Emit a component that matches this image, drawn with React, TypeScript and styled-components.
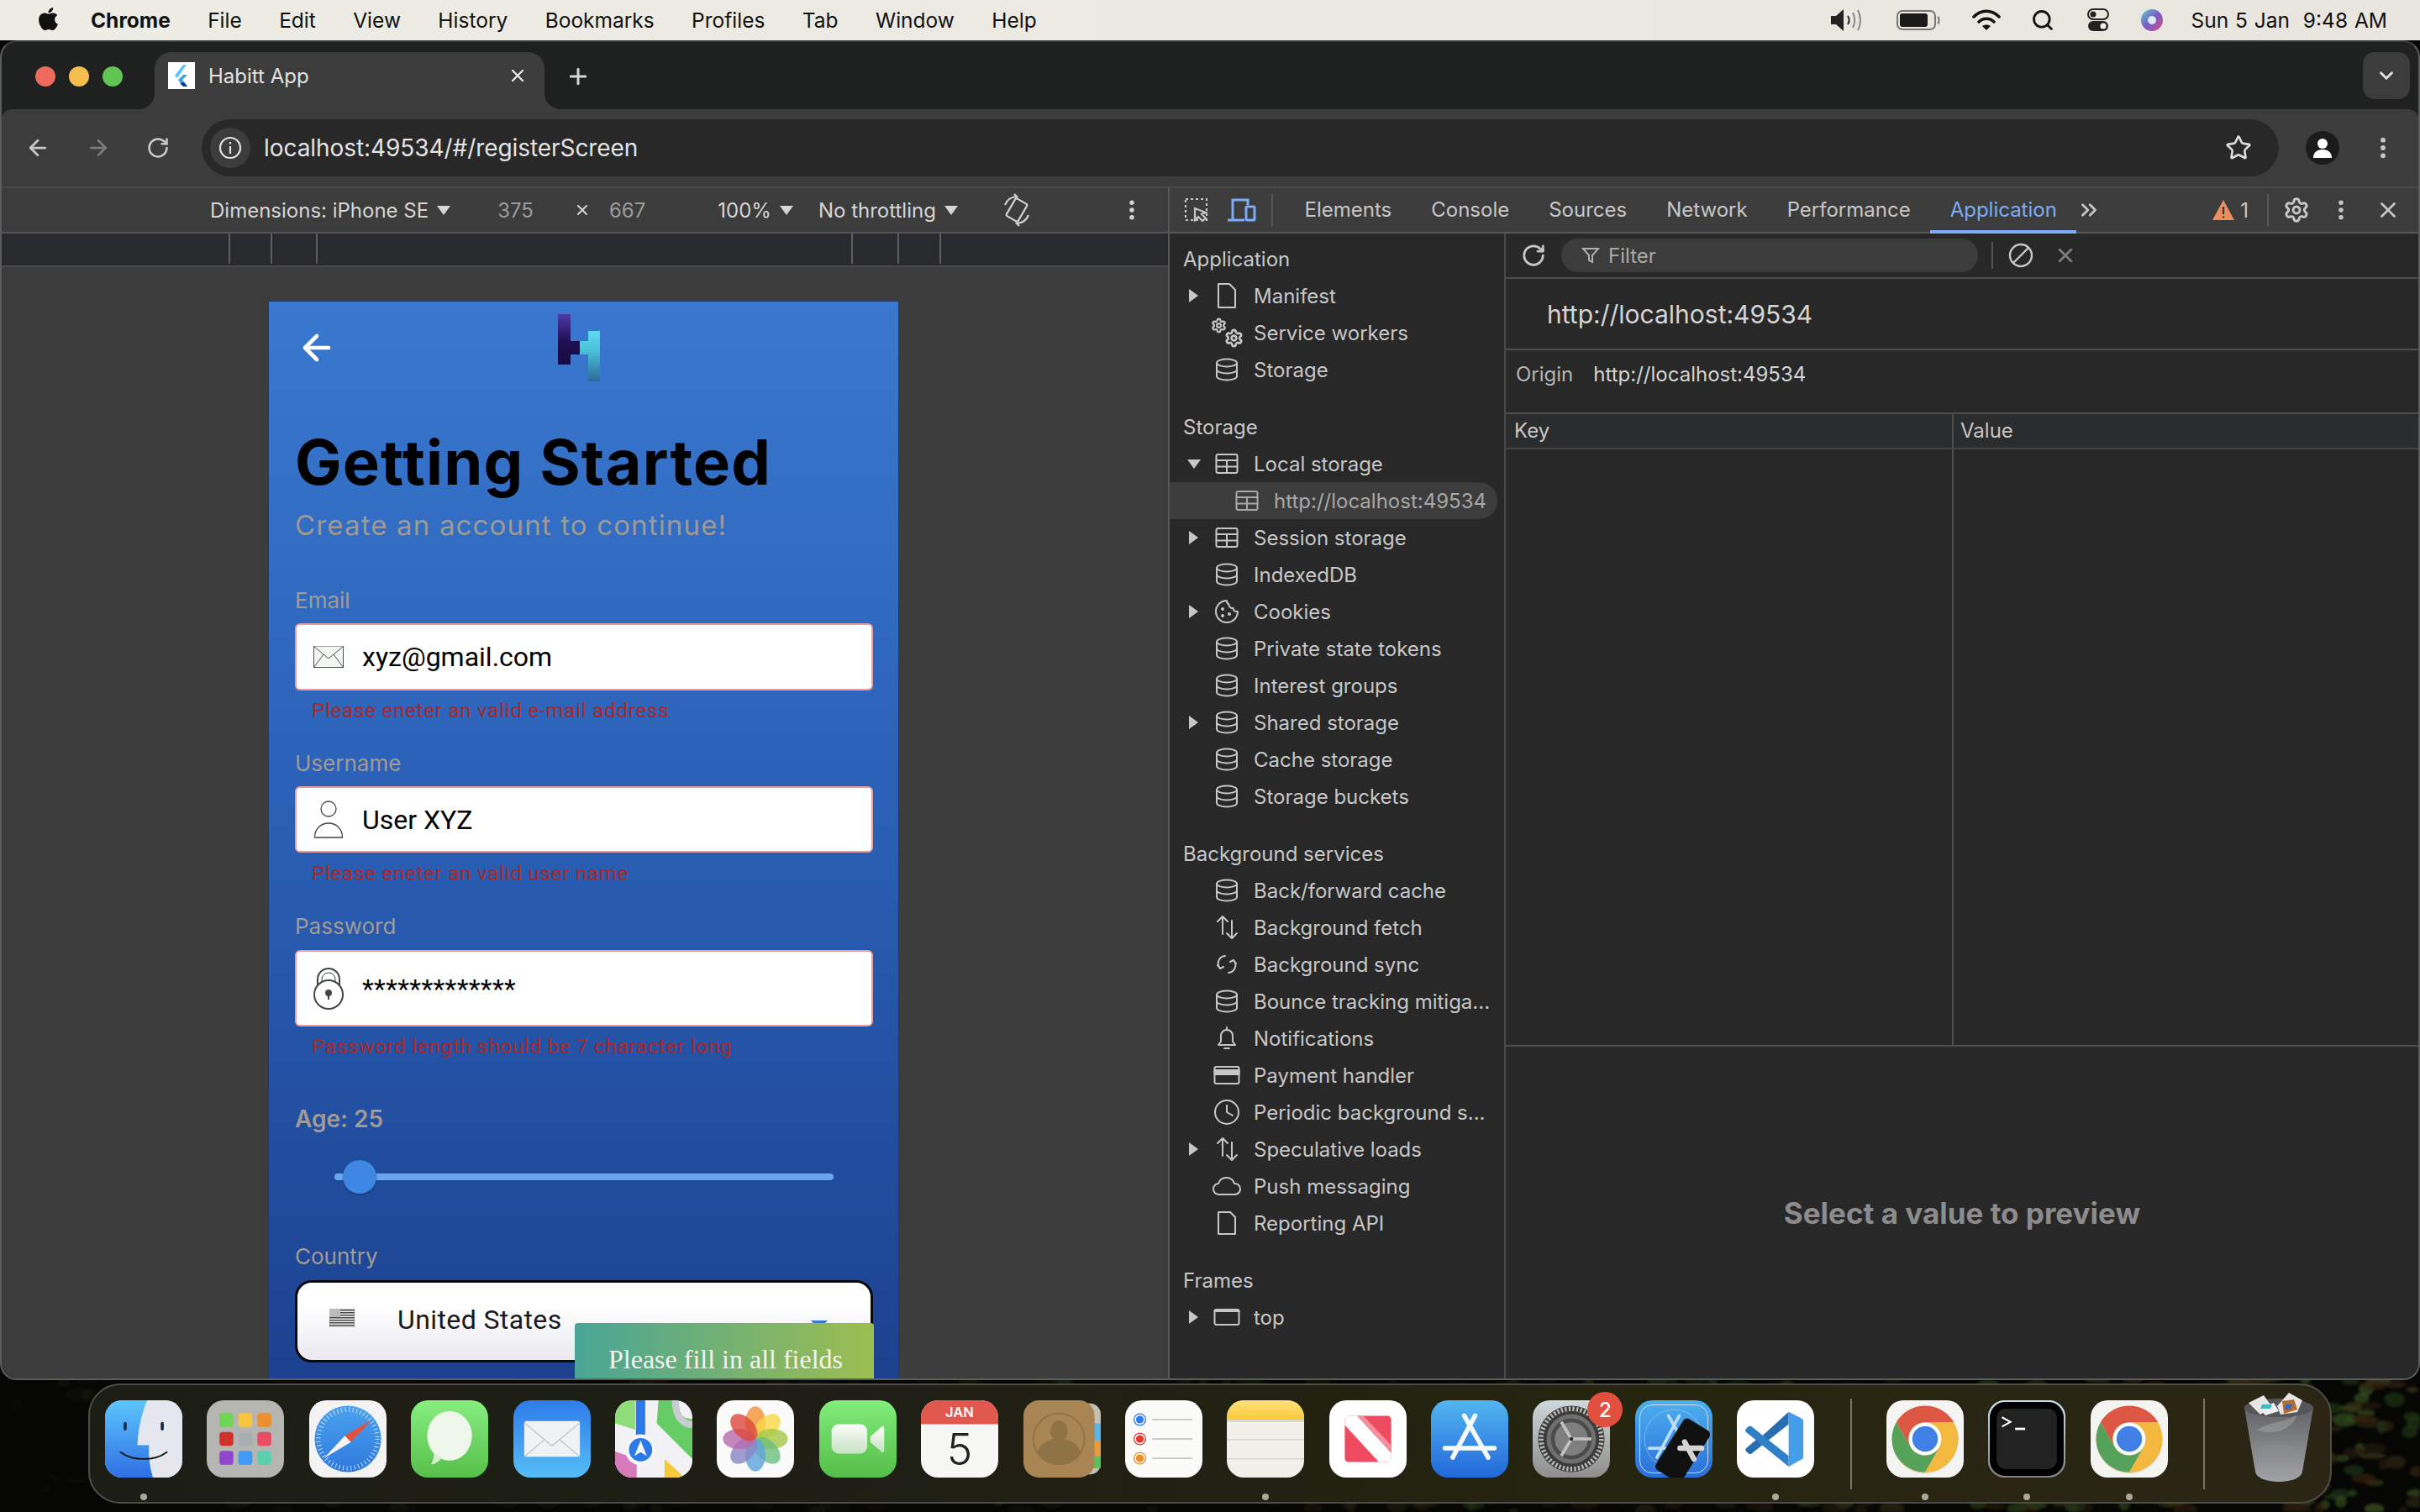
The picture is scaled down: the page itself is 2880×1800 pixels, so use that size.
import React from "react";
import styled, { createGlobalStyle } from "styled-components";
import { FaApple } from "react-icons/fa";
import { ArrowLeft, ArrowRight, RotateCw, Star, EllipsisVertical, X, Plus, ChevronDown, Settings, ChevronsRight, Search } from "lucide-react";

const Global = createGlobalStyle`
  html, body { margin: 0; padding: 0; background: #050604; }
  * { box-sizing: border-box; }
`;
const ui = `Inter, "Liberation Sans", sans-serif`;

const Screen = styled.div`
  position: relative; width: 2880px; height: 1800px; overflow: hidden;
  display: flex; flex-direction: column; font-family: ${ui}; background: #060705;
`;
const WallpaperArt = styled.svg`position: absolute; inset: 0; width: 2880px; height: 1800px; filter: blur(1.5px);`;
const MenuBar = styled.header`
  position: relative; height: 48px; flex: none; display: flex; align-items: center; padding-left: 42px;
  background: linear-gradient(90deg, #edece5, #e8e6df); color: #111; font-size: 24.5px;
`;
const AppleMark = styled.span`display: flex; width: 66px; font-size: 31px; margin-top: -3px;`;
const MenuItems = styled.nav`display: flex; gap: 44.4px;`;
const MenuItem = styled.span<{ $bold?: boolean }>`font-weight: ${(p) => (p.$bold ? 700 : 400)};`;
const StatusArea = styled.div`margin-left: auto; display: flex; align-items: center; padding-right: 39px;`;
const StatusSlot = styled.span<{ $w: number }>`display: flex; width: ${(p) => p.$w}px; align-items: center;`;
const Clock = styled.span`font-size: 24.5px; word-spacing: 1px; white-space: pre;`;

const Window = styled.main`
  position: relative; width: 2880px; height: 1595px; flex: none; display: flex; flex-direction: column;
  border-radius: 20px; overflow: hidden; background: #1f2120; border: 2px solid #5c5c5c; border-top-color: #3a3a3a; 
`;
const TabStrip = styled.div`height: 80px; flex: none; display: flex; align-items: flex-end; padding-left: 182px; position: relative;`;
const Light = styled.i<{ $c: string; $x: number }>`
  position: absolute; left: ${(p) => p.$x}px; top: 29px; width: 24px; height: 24px; border-radius: 50%; background: ${(p) => p.$c};
`;
const BrowserTab = styled.div`
  position: relative; width: 464px; height: 68px; background: #3c3c3c; border-radius: 20px 20px 0 0; display: flex; align-items: center;
  padding: 0 20px 12px 16px; color: #e3e3e3; font-size: 24px;
  &::before, &::after { content: ""; position: absolute; bottom: 0; width: 20px; height: 20px; }
  &::before { left: -20px; background: radial-gradient(circle at 0 0, #1f2120 20px, #3c3c3c 20.5px); }
  &::after { right: -20px; background: radial-gradient(circle at 100% 0, #1f2120 20px, #3c3c3c 20.5px); }
`;
const Favicon = styled.span`width: 32px; height: 32px; background: #fff; display: flex; margin-right: 16px; flex: none;`;
const TabTitle = styled.span`flex: 1;`;
const NewTab = styled.span`display: flex; color: #d5d5d5; margin: 0 0 24px 25px; align-self: flex-end;`;
const TabMenu = styled.span`
  position: absolute; right: 10px; top: 12px; width: 56px; height: 56px; border-radius: 14px; background: #3c3c3c; color: #e3e3e3;
  display: flex; align-items: center; justify-content: center;
`;
const Toolbar = styled.div`
  height: 92px; flex: none; background: #3c3c3c; border-radius: 12px 12px 0 0; display: flex; align-items: center; color: #c8c8c8; padding-left: 28px;
`;
const NavBtn = styled.span<{ $dim?: boolean }>`display: flex; width: 72px; color: ${(p) => (p.$dim ? "#7b7b7b" : "#c8c8c8")};`;
const Omnibox = styled.div`
  width: 2472px; height: 68px; margin-left: -6px; border-radius: 34px; background: #282828; display: flex; align-items: center; padding: 0 10px; color: #e3e3e3; font-size: 28px;
`;
const InfoChip = styled.span`width: 48px; height: 48px; border-radius: 50%; background: #3c3c3c; display: flex; align-items: center; justify-content: center; margin-right: 16px;`;
const UrlText = styled.span`flex: 1; letter-spacing: -0.07px;`;
const StarBtn = styled.span`display: flex; margin-right: 22px; color: #dcdcdc;`;
const Avatar = styled.span`width: 40px; height: 40px; border-radius: 50%; background: #1b1b1b; display: flex; margin-left: 32px; overflow: hidden;`;
const MoreBtn = styled.span`display: flex; margin-left: 36px; color: #c8c8c8;`;

const Workspace = styled.div`flex: 1; min-height: 0; display: flex;`;
const DeviceArea = styled.section`width: 1388px; flex: none; display: flex; flex-direction: column;`;
const DeviceToolbar = styled.div`
  height: 56px; flex: none; display: flex; align-items: center; padding-left: 248px; background: #3c3c3c;
  border-top: 2px solid #484848; border-bottom: 2px solid #565656; color: #d6d6d6; font-size: 24px;
`;
const DeviceItem = styled.span<{ $ml?: number; $dim?: boolean }>`
  display: flex; align-items: center; margin-left: ${(p) => p.$ml ?? 0}px; color: ${(p) => (p.$dim ? "#9b9b9b" : "#d6d6d6")}; white-space: nowrap;
`;
const Caret = styled.i`
  display: inline-block; width: 0; height: 0; margin-left: 10px; border-left: 8px solid transparent; border-right: 8px solid transparent; border-top: 11px solid currentColor;
`;
const Ruler = styled.div`height: 40px; flex: none; background: #292a2d; display: flex; padding-left: 270px; border-bottom: 2px solid #4a4a4a;`;
const RulerTick = styled.i<{ $ml: number }>`width: 2px; height: 36px; background: #5f5f5f; margin-left: ${(p) => p.$ml}px;`;
const Viewport = styled.div`flex: 1; min-height: 0; background: #3c3c3c; padding: 40px 0 0 317px; display: flex;`;
const Phone = styled.div`
  position: relative; width: 751px; overflow: hidden; border: 1px solid #1d3a70; border-bottom: 0; padding: 15px 30px 0 31px;
  background: linear-gradient(180deg, #3a78cf 0%, #2c64ba 40%, #1c418f 100%); color: #a09b94;
  font-family: Inter, sans-serif;
`;
const PhoneHeader = styled.div`display: flex; align-items: center; height: 80px; color: #fff;`;
const BackArrow = styled.span`display: flex; margin-left: 2px; width: 48px;`;
const LogoMark = styled.span`display: flex; margin-left: 263px;`;
const Title = styled.h1`margin: 56px 0 0; font-size: 74px; line-height: 80px; font-weight: 700; color: #000; letter-spacing: 1.2px;`;
const Subtitle = styled.p`margin: 15px 0 0; font-size: 33px; line-height: 40px; color: #9f9a92; letter-spacing: 1.15px;`;
const FieldLabel = styled.div<{ $mt: number }>`margin-top: ${(p) => p.$mt}px; font-size: 26px; line-height: 30px; color: #a09b94;`;
const InputBox = styled.div<{ $h: number; $mt: number; $ls?: number }>`
  margin-top: ${(p) => p.$mt}px; height: ${(p) => p.$h}px; background: #fff; border: 2px solid #ec9c9c; border-radius: 6px;
  display: flex; align-items: center; padding-left: 20px; color: #000; font-family: Roboto, sans-serif; font-size: 32px; letter-spacing: ${(p) => p.$ls ?? 0}px;
`;
const InputIcon = styled.span`display: flex; width: 58px; flex: none;`;
const ErrorText = styled.div<{ $mt: number }>`
  margin: ${(p) => p.$mt}px 0 0 20px; font-family: Roboto, sans-serif; font-size: 24px; line-height: 28px; color: #ab2727; letter-spacing: 0.8px; 
`;
const AgeLabel = styled.div`margin-top: 54px; font-size: 28px; line-height: 36px; font-weight: 600; color: #a09b94;`;
const SliderTrack = styled.div`position: relative; margin: 47px 47px 0; height: 8px; border-radius: 4px; background: #6aa6ef; margin-bottom: 16px;`;
const SliderThumb = styled.i`position: absolute; left: 10px; top: -16px; width: 40px; height: 40px; border-radius: 50%; background: #3e87e2; box-shadow: 0 1px 3px rgba(0,0,0,.3);`;
const SelectBox = styled.div`
  margin-top: 13px; height: 98px; border: 3px solid #0a0a0a; border-radius: 20px; background: linear-gradient(180deg, #fff 30%, #e9e9ef 100%);
  display: flex; align-items: center; padding-left: 38px; color: #1a1a1a; font-family: Roboto, sans-serif; font-size: 32px; letter-spacing: 0.4px;
`;
const FlagSlot = styled.span`display: flex; width: 81px; flex: none; margin-top: -8px;`;
const SelectText = styled.span`margin-top: -4px;`;
const SelectCaret = styled.i`
  position: absolute; left: 645px; top: 1213px; width: 0; height: 0; border-left: 10px solid transparent; border-right: 10px solid transparent; border-top: 11px solid #3a78cf;
`;
const Toast = styled.div`
  position: absolute; right: 29px; bottom: 0; width: 356px; height: 66px; border-radius: 4px 4px 0 0; 
  background: linear-gradient(90deg, #49a596, #9dbe50); color: #f4f4f0; font-family: "Liberation Serif", serif; font-size: 32px;
  display: flex; align-items: flex-start; padding: 25px 0 0 40px; white-space: nowrap;
`;

const DevTools = styled.section`flex: 1; min-width: 0; display: flex; flex-direction: column; background: #282828; border-left: 2px solid #565656; color: #c7c7c7; font-size: 24px;`;
const DevTabs = styled.div`
  height: 56px; flex: none; display: flex; align-items: center; background: #3c3c3c; border-top: 2px solid #484848; border-bottom: 2px solid #565656; padding-left: 16px;
`;
const DevIcon = styled.span<{ $w: number; $c?: string; $ml?: number }>`display: flex; width: ${(p) => p.$w}px; justify-content: center; margin-left: ${(p) => p.$ml ?? 0}px; color: ${(p) => p.$c ?? "#c7c7c7"};`;
const DevSep = styled.i<{ $mx: number }>`width: 2px; height: 38px; background: #565656; margin: 0 ${(p) => p.$mx}px;`;
const DevTab = styled.span<{ $on?: boolean; $ml?: number }>`
  position: relative; padding: 0 23.5px; line-height: 52px; height: 52px; margin-left: ${(p) => p.$ml ?? 0}px; color: ${(p) => (p.$on ? "#7cacf8" : "#c7c7c7")}; white-space: nowrap;
  ${(p) => p.$on && `&::after { content: ""; position: absolute; left: 0; right: 0; bottom: -2px; height: 4px; background: #7cacf8; }`}
`;
const DevTabsRight = styled.div`margin-left: auto; display: flex; align-items: center; padding-right: 8px;`;
const WarnCount = styled.span`margin: 0 14px 0 6px;`;
const DevBody = styled.div`flex: 1; min-height: 0; display: flex;`;
const Sidebar = styled.aside`width: 400px; flex: none; padding-top: 8px; display: flex; flex-direction: column; gap: 24px; border-right: 2px solid #4a4a4a;`;
const TreeGroup = styled.div`display: flex; flex-direction: column;`;
const TreeHeading = styled.div`height: 44px; line-height: 46px; padding-left: 16px;`;
const TreeRow = styled.div<{ $sel?: boolean }>`
  height: 44px; display: flex; align-items: center; padding-left: ${(p) => (p.$sel ? 44 : 20)}px; width: 390px; white-space: nowrap;
  ${(p) => p.$sel && `background: #3c3c3c; border-radius: 0 22px 22px 0; color: #a8a8a8;`}
`;
const ArrowSlot = styled.span`width: 28px; flex: none; display: flex; align-items: center; padding-left: 3px;`;
const ArrowRightMark = styled.i`width: 0; height: 0; border-top: 8px solid transparent; border-bottom: 8px solid transparent; border-left: 11px solid #c7c7c7;`;
const ArrowDownMark = styled.i`width: 0; height: 0; border-left: 8px solid transparent; border-right: 8px solid transparent; border-top: 11px solid #c7c7c7; margin-left: -2px;`;
const NodeIcon = styled.span`width: 40px; flex: none; display: flex; justify-content: center; margin-right: 12px;`;
const Pane = styled.div`flex: 1; min-width: 0; display: flex; flex-direction: column;`;
const FilterBar = styled.div`height: 54px; flex: none; display: flex; align-items: center; padding-left: 18px; border-bottom: 2px solid #4e4e4e;`;
const FilterPill = styled.div`
  width: 496px; height: 40px; border-radius: 20px; background: #3c3c3c; margin-left: 18px; display: flex; align-items: center; padding-left: 24px; color: #a9a9a9; gap: 10px;
`;
const FilterSep = styled.i`width: 2px; height: 32px; background: #565656; margin: 0 18px 0 16px;`;
const OriginTitle = styled.div`height: 85px; flex: none; display: flex; align-items: center; padding-left: 49px; border-bottom: 2px solid #4e4e4e; font-size: 30px; color: #d4d4d4;`;
const OriginRow = styled.div`height: 76px; flex: none; display: flex; align-items: center; padding: 0 0 18px 12px; border-bottom: 2px solid #4e4e4e; gap: 24px; color: #d4d4d4;`;
const OriginKey = styled.span`color: #b5b5b5;`;
const StorageTable = styled.div`height: 753px; flex: none; display: grid; grid-template-columns: 533px 1fr; grid-template-rows: 42px 1fr; border-bottom: 2px solid #4e4e4e;`;
const HeadCell = styled.div<{ $last?: boolean }>`
  background: #2b2c2e; border-bottom: 2px solid #444; padding-left: ${(p) => (p.$last ? 8 : 10)}px; line-height: 40px; ${(p) => !p.$last && "border-right: 2px solid #4e4e4e;"}
`;
const BodyCell = styled.div<{ $last?: boolean }>`${(p) => !p.$last && "border-right: 2px solid #4e4e4e;"}`;
const Preview = styled.div`flex: 1; display: flex; align-items: center; justify-content: center; font-size: 35px; font-weight: 700; color: #8c8c8c;`;

const Dock = styled.footer`
  position: relative; flex: none; width: 2670px; height: 143px; margin: 4px 0 0 105px; border-radius: 38px; border: 2px solid #4e4d45;
  background: linear-gradient(90deg, #1c1d14 0%, #1f1f14 40%, #26250f 70%, #2c2516 100%); display: flex; padding: 18px 0 0 18px; gap: 29.4px;
`;
const DockItem = styled.div`position: relative; width: 92px; flex: none; display: flex; flex-direction: column; align-items: center;`;
const DockArt = styled.span<{ $mt?: number }>`display: flex; width: 92px; height: 92px; margin-top: ${(p) => p.$mt ?? 0}px;`;
const RunDot = styled.i<{ $on?: boolean }>`width: 8px; height: 8px; border-radius: 50%; margin-top: 19px; background: ${(p) => (p.$on ? "#a9a89c" : "transparent")};`;
const DockSep = styled.i`width: 2px; height: 108px; margin: -2px 12px 0 13px; background: #77756a; flex: none;`;
const Badge = styled.span`
  position: absolute; right: -15px; top: -10px; width: 42px; height: 42px; border-radius: 50%; background: #e14f3f; color: #fff; font-size: 24px;
  display: flex; align-items: center; justify-content: center; font-weight: 500;
`;

const I = ({ w, h, vb, children, sw = 2 }: any) => (
  <svg width={w} height={h} viewBox={vb} fill="none" stroke="currentColor" strokeWidth={sw} strokeLinecap="round" strokeLinejoin="round">{children}</svg>
);

const nodeIcons: Record<string, React.ReactNode> = {
  doc: <I w={26} h={32} vb="0 0 26 32"><path d="M3 2h13l7 7v21H3z" /></I>,
  gears: <svg width="38" height="36" viewBox="0 0 38 36"><Settings x={0} y={0} size={19} strokeWidth={2.8} /><Settings x={16} y={13} size={23} strokeWidth={2.8} /></svg>,
  db: <I w={28} h={28} vb="0 0 28 28"><ellipse cx="14" cy="6" rx="12" ry="4.5" /><path d="M2 6v16c0 2.5 5.4 4.5 12 4.5S26 24.500 26 22V6M2 14c0 2.500 5.400 4.500 12 4.500S26 16.500 26 14" /></I>,
  table: <I w={28} h={26} vb="0 0 28 26"><rect x="1.500" y="2" width="25" height="22" rx="2" /><path d="M1.500 9h25M1.500 16.500h25M14 9v15" /></I>,
  cookie: <I w={32} h={32} vb="0 0 32 32"><path d="M16 3a13 13 0 1 0 13 13c-3 .5-5-1-5.500-4-3 .5-5-1.500-5-4.500C16.500 7 16 5 16 3z" /><circle cx="11" cy="13" r="1" fill="currentColor" /><circle cx="19" cy="19" r="1" fill="currentColor" /><circle cx="11" cy="21" r="1" fill="currentColor" /></I>,
  updown: <I w={28} h={32} vb="0 0 28 32"><path d="M9 24V3M3 9l6-6 6 6M20 8v21M14 23l6 6 6-6" /></I>,
  sync: <I w={26} h={28} vb="0 0 26 28"><path d="M11 4a9 9 0 0 0-6 15M2 15l3 4 4-2M15 24a9 9 0 0 0 6-15M24 13l-3-4-4 2" /></I>,
  bell: <I w={26} h={32} vb="0 0 26 32"><path d="M3 24h20l-3-4v-7a7 7 0 0 0-14 0v7zM13 3v3M10 28h6" /></I>,
  card: <I w={32} h={24} vb="0 0 32 24"><rect x="1.500" y="2" width="29" height="20" rx="2" /><rect x="1.500" y="6" width="29" height="5" fill="currentColor" /></I>,
  clock: <I w={32} h={32} vb="0 0 32 32"><circle cx="16" cy="16" r="14" /><path d="M16 8v8l7 4" /></I>,
  cloud: <I w={36} h={26} vb="0 0 36 26"><path d="M9 23a6.500 6.500 0 0 1-1-13 10 10 0 0 1 19 0 6.500 6.500 0 0 1 1 13z" /></I>,
  report: <I w={26} h={30} vb="0 0 26 30"><path d="M3 2h14l6 6v20H3z" /></I>,
  frame: <I w={32} h={24} vb="0 0 32 24"><rect x="1.500" y="3" width="29" height="18" rx="2" /><path d="M1.500 5h29" /></I>,
};

type Node = { label: string; icon: string; arrow?: "right" | "down"; sel?: boolean };
const tree: { title: string; rows: Node[] }[] = [
  { title: "Application", rows: [
    { label: "Manifest", icon: "doc", arrow: "right" },
    { label: "Service workers", icon: "gears" },
    { label: "Storage", icon: "db" },
  ] },
  { title: "Storage", rows: [
    { label: "Local storage", icon: "table", arrow: "down" },
    { label: "http://localhost:49534", icon: "table", sel: true },
    { label: "Session storage", icon: "table", arrow: "right" },
    { label: "IndexedDB", icon: "db" },
    { label: "Cookies", icon: "cookie", arrow: "right" },
    { label: "Private state tokens", icon: "db" },
    { label: "Interest groups", icon: "db" },
    { label: "Shared storage", icon: "db", arrow: "right" },
    { label: "Cache storage", icon: "db" },
    { label: "Storage buckets", icon: "db" },
  ] },
  { title: "Background services", rows: [
    { label: "Back/forward cache", icon: "db" },
    { label: "Background fetch", icon: "updown" },
    { label: "Background sync", icon: "sync" },
    { label: "Bounce tracking mitiga...", icon: "db" },
    { label: "Notifications", icon: "bell" },
    { label: "Payment handler", icon: "card" },
    { label: "Periodic background s...", icon: "clock" },
    { label: "Speculative loads", icon: "updown", arrow: "right" },
    { label: "Push messaging", icon: "cloud" },
    { label: "Reporting API", icon: "report" },
  ] },
  { title: "Frames", rows: [{ label: "top", icon: "frame", arrow: "right" }] },
];

const Base = ({ fill, children }: any) => (
  <svg width="92" height="92" viewBox="0 0 100 100">
    <rect width="100" height="100" rx="22" fill={fill} />
    {children}
  </svg>
);
const Grad = ({ id, a, b, x2 = 0, y2 = 1 }: any) => (
  <linearGradient id={id} x1="0" y1="0" x2={x2} y2={y2}><stop offset="0" stopColor={a} /><stop offset="1" stopColor={b} /></linearGradient>
);

const Finder = () => (
  <Base fill="#dfe3ec">
    <defs><Grad id="fb" a="#5cc6fb" b="#2e6fe6" /><clipPath id="fc"><rect width="100" height="100" rx="22" /></clipPath></defs>
    <g clipPath="url(#fc)">
      <path d="M0 0h55C47 16 43 40 42 58h15c-1 14 1 28 5 42H0z" fill="url(#fb)" />
      <path d="M55 0h45v100H62c-4-14-6-28-5-42H42c1-18 5-42 13-58z" fill="#e4e7ee" />
    </g>
    <rect x="24" y="28" width="4" height="11" rx="2" fill="#1c2a44" /><rect x="72" y="28" width="4" height="11" rx="2" fill="#1c2a44" />
    <path d="M20 67c16 12 44 12 60 0" stroke="#111" strokeWidth="2" fill="none" strokeLinecap="round" />
  </Base>
);
const Launchpad = () => {
  const c = ["#6fd653", "#f8c53f", "#ee8f2e", "#d2322a", "#a9aeb2", "#e84d63", "#9146cf", "#3f9bf4", "#5ccfae"];
  return (
    <Base fill="#b5b5b1">
      {c.map((f, i) => <rect key={i} x={16.500 + (i % 3) * 24.500} y={16.500 + Math.floor(i / 3) * 24.500} width="18" height="18" rx="4" fill={f} />)}
    </Base>
  );
};
const Safari = () => (
  <Base fill="#f3f3f3">
    <defs><Grad id="sb" a="#4aa3ee" b="#2f79de" /></defs>
    <circle cx="50" cy="50" r="43" fill="url(#sb)" />
    <circle cx="50" cy="50" r="38" fill="none" stroke="#cfe3fa" strokeWidth="6" strokeDasharray="1 4" />
    <path d="M81 25L46 46l8 8z" fill="#e0523f" />
    <path d="M19 75L46 46l8 8z" fill="#f4f4f4" />
  </Base>
);
const Messages = () => (
  <Base fill="url(#mg)">
    <defs><Grad id="mg" a="#86ee80" b="#56c04a" /></defs>
    <ellipse cx="50" cy="46" rx="29" ry="32" fill="#eef7ea" />
    <path d="M30 68c0 6-2 12-4 15 5 0 11-4 14-9z" fill="#dcefd6" />
  </Base>
);
const Mail = () => (
  <Base fill="url(#ma)">
    <defs><Grad id="ma" a="#2f7cea" b="#54bdf6" /></defs>
    <rect x="14" y="27" width="72" height="46" rx="3" fill="#f1f2f3" />
    <path d="M14 29l36 30 36-30M14 73l26-22M86 73L60 51" stroke="#c2c6cc" strokeWidth="1.500" fill="none" />
  </Base>
);
const Maps = () => (
  <Base fill="#f2f2f5">
    <defs><clipPath id="mc"><rect width="100" height="100" rx="22" /></clipPath></defs>
    <g clipPath="url(#mc)">
      <path d="M0 0h26v38L0 30z" fill="#8fdc7b" />
      <path d="M54 30L100 76V24C90 24 82 20 78 0H56z" fill="#66cc66" />
      <path d="M0 66l28 10v24H0z" fill="#d77bbd" />
      <path d="M64 100V76l26 24z" fill="#f5c93a" />
      <rect x="27" y="0" width="12" height="52" fill="#2c79ea" />
      <path d="M78 0c0 20 8 30 22 32" stroke="#c9ccd0" strokeWidth="9" fill="none" />
    </g>
    <circle cx="33" cy="64" r="20" fill="#f4f5f7" />
    <circle cx="33" cy="64" r="15" fill="#2c79ea" />
    <path d="M33 52l8 20-8-5-8 5z" fill="#f5f7fa" />
  </Base>
);
const Photos = () => {
  const c = ["#f29437", "#f6d94a", "#a8c84a", "#6fbf7d", "#5fa5dc", "#8b86c4", "#b66cae", "#dd4b3e"];
  return (
    <Base fill="#fbfbfb">
      {c.map((f, i) => <ellipse key={i} cx="50" cy="29" rx="13" ry="21" fill={f} opacity=".82" transform={`rotate(${i * 45} 50 50)`} />)}
    </Base>
  );
};
const FaceTime = () => (
  <Base fill="url(#ft)">
    <defs><Grad id="ft" a="#82ed7c" b="#55bd49" /><Grad id="ftw" a="#fbfdfa" b="#c8e2c4" /></defs>
    <rect x="16" y="31" width="46" height="38" rx="9" fill="url(#ftw)" />
    <path d="M66 47l15-13c2-1 3 0 3 2v29c0 2-2 3-3 2L66 54z" fill="url(#ftw)" />
  </Base>
);
const Calendar = () => (
  <Base fill="#f7f7f6">
    <defs><clipPath id="cc"><rect width="100" height="100" rx="22" /></clipPath></defs>
    <rect width="100" height="31" fill="#e0584e" clipPath="url(#cc)" />
    <text x="50" y="22" fontSize="18" fontWeight="600" fill="#fff" textAnchor="middle" fontFamily="Inter, sans-serif">JAN</text>
    <text x="50" y="84" fontSize="56" fontWeight="300" fill="#222" textAnchor="middle" fontFamily="Inter, sans-serif">5</text>
  </Base>
);
const Contacts = () => (
  <svg width="92" height="92" viewBox="0 0 100 100">
    <rect x="60" y="4" width="40" height="92" rx="14" fill="#c5c0b4" />
    <rect x="88" y="30" width="12" height="22" fill="#56b4ee" /><rect x="88" y="52" width="12" height="20" fill="#e99a3a" /><rect x="88" y="72" width="12" height="16" fill="#5cc05a" />
    <rect width="92" height="100" rx="20" fill="#a88552" />
    <circle cx="46" cy="50" r="33" fill="none" stroke="#8f7245" strokeWidth="2" />
    <ellipse cx="46" cy="40" rx="11" ry="14" fill="#8f7245" />
    <path d="M18 68c4-14 16-18 28-18s24 4 28 18c-6 10-16 15-28 15s-22-5-28-15z" fill="#8f7245" />
  </svg>
);
const Reminders = () => (
  <Base fill="#fbfbfa">
    {[["#2d7cf0", 25], ["#e4392f", 50], ["#ec8f22", 75]].map(([f, y]: any) => (
      <g key={y}>
        <circle cx="19" cy={y} r="7.500" fill="none" stroke={f} strokeWidth="1.500" />
        <circle cx="19" cy={y} r="5" fill={f} />
        <rect x="35" y={y - 1} width="52" height="2" fill="#c9c9c9" />
      </g>
    ))}
  </Base>
);
const Notes = () => (
  <Base fill="#f2f0ea">
    <defs><Grad id="ny" a="#fde07c" b="#fbc93a" /><clipPath id="nc"><rect width="100" height="100" rx="22" /></clipPath></defs>
    <rect width="100" height="25" fill="url(#ny)" clipPath="url(#nc)" />
    <rect y="25" width="100" height="3" fill="#d9d6cc" />
    <rect y="50" width="100" height="1.500" fill="#d6d3c9" /><rect y="75" width="100" height="1.500" fill="#d6d3c9" />
  </Base>
);
const News = () => (
  <Base fill="#fff">
    <rect x="20" y="20" width="60" height="60" rx="5" fill="#ee4a60" />
    <path d="M20 20h16L80 68v12H64L20 32z" fill="#fff" />
    <path d="M36 20h8L80 58v10z" fill="#f6909d" />
  </Base>
);
const AStrokes = ({ c = "#f6fafe", w = 6 }: any) => (
  <g stroke={c} strokeWidth={w} strokeLinecap="round" fill="none">
    <path d="M57 20L28 74M43 20l31 54M18 62h64" />
  </g>
);
const AppStore = () => (
  <Base fill="url(#as)">
    <defs><Grad id="as" a="#53b6f0" b="#2268dc" /></defs>
    <AStrokes />
  </Base>
);
const SystemSettings = () => (
  <Base fill="url(#ss)">
    <defs><Grad id="ss" a="#cfd8dc" b="#8e8e8c" /></defs>
    <circle cx="50" cy="50" r="43" fill="#3b3b3b" />
    <circle cx="50" cy="50" r="39" fill="none" stroke="#b9b9b9" strokeWidth="6" strokeDasharray="2.500 2.500" />
    <circle cx="50" cy="50" r="32" fill="#6f6f6f" />
    <circle cx="50" cy="50" r="24" fill="#7e7e7e" stroke="#4c4c4c" strokeWidth="5" />
    <path d="M50 50L37 28M50 50L76 50M50 50L37 72" stroke="#c2c2c2" strokeWidth="4" />
    <circle cx="50" cy="50" r="2.500" fill="#333" />
  </Base>
);
const XcodeLike = () => (
  <Base fill="url(#xc)">
    <defs><Grad id="xc" a="#4db0ef" b="#2a6ed9" /></defs>
    <rect x="6" y="6" width="88" height="88" rx="16" fill="none" stroke="#d5e8fb" strokeWidth="1" />
    <circle cx="50" cy="50" r="38" fill="none" stroke="#9ccbf5" strokeWidth=".7" />
    <AStrokes c="#bcdcf8" w={4} />
    <g transform="rotate(32 62 64)">
      <rect x="42" y="26" width="40" height="78" rx="6" fill="#101010" />
    </g>
    <path d="M64 54L76 76M58 62h28" stroke="#d4d4d4" strokeWidth="7" strokeLinecap="round" />
  </Base>
);
const VSCode = () => (
  <Base fill="#fff">
    <path d="M67 15L33 46 19 34c-2-1-3-1-5 1l-2 2c-1 2-1 3 0 4l13 10L12 62c-1 1-1 3 0 4l2 2c2 2 3 2 5 1l48-38z" fill="#2a6cb4" />
    <path d="M14 35c2-2 3-2 5-1l48 38v14L12 41c-1-1-1-3 0-4z" fill="#2f7fc9" />
    <path d="M67 15l16 8c2 1 3 2 3 4v46c0 2-1 3-3 4l-16 9z" fill="#459ce8" />
  </Base>
);
const ChromeIcon = () => {
  const red = "M12.800 28.500A43 43 0 0 1 87.200 28.500L50 28.500A21.500 21.500 0 0 0 31.400 60.750Z";
  return (
    <Base fill="#f4f4f2">
      <circle cx="50" cy="51.500" r="43" fill="#c98e2c" opacity=".4" />
      <path d={red} fill="#dd5844" />
      <path d={red} fill="#f3b93f" transform="rotate(120 50 50)" />
      <path d={red} fill="#56a25a" transform="rotate(240 50 50)" />
      <circle cx="50" cy="50" r="21" fill="#fff" />
      <circle cx="50" cy="50" r="16.500" fill="#4180e6" />
    </Base>
  );
};
const Terminal = () => (
  <svg width="92" height="92" viewBox="0 0 100 100">
    <defs><Grad id="tb" a="#c6e4f0" b="#808080" /></defs>
    <rect x="1" y="1" width="98" height="98" rx="21" fill="#000" stroke="url(#tb)" strokeWidth="2.500" />
    <rect x="11" y="11" width="78" height="78" rx="12" fill="#222" />
    <path d="M18 22l11 6-11 6" stroke="#fff" strokeWidth="2.200" fill="none" />
    <path d="M35 37h13" stroke="#fff" strokeWidth="3" />
  </svg>
);
const Trash = () => (
  <svg width="92" height="108" viewBox="0 0 92 108">
    <defs><Grad id="tr" a="#636468" b="#a2a3a4" /></defs>
    <path d="M5 18L18 94c1 7 12 12 28 12s27-5 28-12l13-76z" fill="url(#tr)" />
    <path d="M20 44c16-10 32-8 48-18-6 18-28 26-48 18z" fill="#a9aaab" opacity=".45" />
    <path d="M22 66c14-6 30-6 44 0-4 14-34 16-44 0z" fill="#8d8e90" opacity=".5" />
    <ellipse cx="46" cy="18" rx="41" ry="11" fill="#55565a" />
    <path d="M10 12L28 3l10 14-14 9zM44 16L58 0l16 9-6 14-20 3z" fill="#e6e6e6" />
    <path d="M22 18l18-6 6 10-16 5z" fill="#eee" /><path d="M26 14h12l-2 5H24z" fill="#4ab6c2" />
    <path d="M50 10l14-2 4 12-16 5z" fill="#b36c2e" /><path d="M54 14h8l-2 6h-7z" fill="#3c64b8" />
  </svg>
);

const dockApps: { art: React.ReactNode; on?: boolean; badge?: string }[] = [
  { art: <Finder />, on: true }, { art: <Launchpad /> }, { art: <Safari /> }, { art: <Messages /> }, { art: <Mail /> }, { art: <Maps /> },
  { art: <Photos /> }, { art: <FaceTime /> }, { art: <Calendar /> }, { art: <Contacts /> }, { art: <Reminders /> }, { art: <Notes />, on: true },
  { art: <News /> }, { art: <AppStore /> }, { art: <SystemSettings />, badge: "2" }, { art: <XcodeLike /> }, { art: <VSCode />, on: true },
];

const wallpaperBlobs = (() => {
  let s = 12345;
  const r = () => ((s = (s * 16807) % 2147483647) / 2147483647);
  const pal = ["#2f4a1b", "#36501e", "#2e2412", "#241a0e", "#3a3516", "#1f3314", "#34200f"];
  const out: any[] = [];
  for (let i = 0; i < 1300; i++) {
    const x = r() * 2880;
    const y = 1640 + r() * 160;
    const f = x / 2880;
    if (r() > 0.2 + f * 0.8) continue;
    out.push({ x, y, rx: 5 + r() * 11, ry: 3 + r() * 6, c: pal[Math.floor(r() * pal.length)], o: 0.12 + f * f * 0.6 });
  }
  return out;
})();

const MailGlyph = () => (
  <svg width="36" height="26" viewBox="0 0 36 26" fill="#f4f6f4" stroke="#4c5450" strokeWidth="1"><rect x=".5" y=".5" width="35" height="25" /><path d="M.5.5L18 15 35.500.5M.5 25.500L12 10M35.500 25.500L24 10" /></svg>
);
const UserGlyph = () => (
  <svg width="36" height="46" viewBox="0 0 36 46" fill="none" stroke="#3f4644" strokeWidth="1.300"><circle cx="18" cy="10" r="9" /><path d="M1.500 44c0-10 7-17 16.500-17s16.500 7 16.500 17z" /></svg>
);
const LockGlyph = () => (
  <svg width="36" height="52" viewBox="0 0 36 52" fill="none" stroke="#3f4644" strokeWidth="2"><path d="M5 22V15a13 13 0 0 1 26 0v7" /><path d="M10 18V15a8 8 0 0 1 16 0v3" strokeWidth="1" /><circle cx="18" cy="33" r="17" /><circle cx="18" cy="31" r="3" fill="#3f4644" /><path d="M18 32v7" strokeWidth="2" /></svg>
);
const FlagGlyph = () => (
  <svg width="30" height="22" viewBox="0 0 30 22"><rect width="30" height="22" fill="#eee" stroke="#555" strokeWidth=".5" />{[1, 4, 7, 10, 13, 16, 19].map((y) => <rect key={y} y={y} width="30" height="1.500" fill="#4a4a4a" />)}<rect width="13" height="10" fill="#bbb" /></svg>
);

export default function App() {
  return (
    <Screen>
      <Global />
      <WallpaperArt viewBox="0 0 2880 1800" aria-hidden>
        {wallpaperBlobs.map((b, i) => <ellipse key={i} cx={b.x} cy={b.y} rx={b.rx} ry={b.ry} fill={b.c} opacity={b.o} />)}
      </WallpaperArt>
      <MenuBar>
        <AppleMark><FaApple /></AppleMark>
        <MenuItems>
          <MenuItem $bold>Chrome</MenuItem>
          {["File", "Edit", "View", "History", "Bookmarks", "Profiles", "Tab", "Window", "Help"].map((m) => <MenuItem key={m}>{m}</MenuItem>)}
        </MenuItems>
        <StatusArea>
          <StatusSlot $w={80}>
            <svg width="42" height="28" viewBox="0 0 42 28"><path d="M2 9h6l9-8v26l-9-8H2z" fill="#222" /><path d="M22 9c2 3 2 7 0 10" stroke="#222" strokeWidth="2" fill="none" /><path d="M28 5c3 6 3 12 0 18M34 2c4 8 4 16 0 24" stroke="#888" strokeWidth="2" fill="none" /></svg>
          </StatusSlot>
          <StatusSlot $w={90}>
            <svg width="52" height="26" viewBox="0 0 52 26"><rect x="1" y="2" width="45" height="22" rx="6" fill="none" stroke="#777" strokeWidth="2" /><rect x="4" y="5" width="33" height="16" rx="3" fill="#1a1a1a" /><path d="M49 9c2 1 2 7 0 8" stroke="#777" strokeWidth="2" fill="none" /></svg>
          </StatusSlot>
          <StatusSlot $w={70}>
            <svg width="34" height="26" viewBox="0 0 34 26" fill="none" stroke="#111" strokeWidth="3.500" strokeLinecap="round"><path d="M2 9c9-9 21-9 30 0M8 15c5-5 13-5 18 0" /><path d="M17 25l-5-5c3-2 7-2 10 0z" fill="#111" stroke="none" /></svg>
          </StatusSlot>
          <StatusSlot $w={66}><Search size={28} strokeWidth={2.4} color="#111" /></StatusSlot>
          <StatusSlot $w={64}>
            <svg width="28" height="28" viewBox="0 0 28 28"><rect x="2" y="1" width="24" height="12" rx="6" fill="none" stroke="#222" strokeWidth="2" /><circle cx="8" cy="7" r="3.500" fill="#222" /><rect x="2" y="15" width="24" height="12" rx="6" fill="#222" /><circle cx="20" cy="21" r="3.500" fill="#eee" /></svg>
          </StatusSlot>
          <StatusSlot $w={60}>
            <svg width="28" height="28" viewBox="0 0 28 28"><defs><linearGradient id="sir" x1="0" y1="0" x2="1" y2="1"><stop offset="0" stopColor="#5fd0c5" /><stop offset=".5" stopColor="#7a5cc9" /><stop offset="1" stopColor="#d8507f" /></linearGradient></defs><circle cx="14" cy="14" r="13" fill="url(#sir)" /><circle cx="14" cy="14" r="5" fill="#dfe8f5" /></svg>
          </StatusSlot>
          <Clock>Sun 5 Jan  9:48 AM</Clock>
        </StatusArea>
      </MenuBar>
      <Window>
        <TabStrip>
          <Light $c="#ed6a5e" $x={40} /><Light $c="#f4bf4f" $x={80} /><Light $c="#61c554" $x={120} />
          <BrowserTab>
            <Favicon>
              <svg width="32" height="32" viewBox="0 0 32 32"><path d="M18 3L8 16l3 3L22 3z" fill="#5cc6f5" /><path d="M18 15l-6 6 6 8h5l-6-8 6-6z" fill="#3aa0e6" /><path d="M14 25l4 4h5l-4-5z" fill="#0a3f86" /></svg>
            </Favicon>
            <TabTitle>Habitt App</TabTitle>
            <X size={24} strokeWidth={2.4} />
          </BrowserTab>
          <NewTab><Plus size={30} strokeWidth={2.4} /></NewTab>
          <TabMenu><ChevronDown size={26} strokeWidth={2.6} /></TabMenu>
        </TabStrip>
        <Toolbar>
          <NavBtn><ArrowLeft size={30} strokeWidth={2.2} /></NavBtn>
          <NavBtn $dim><ArrowRight size={30} strokeWidth={2.2} /></NavBtn>
          <NavBtn><RotateCw size={28} strokeWidth={2.2} /></NavBtn>
          <Omnibox>
            <InfoChip>
              <svg width="28" height="28" viewBox="0 0 28 28" fill="none" stroke="#e3e3e3" strokeWidth="2.200"><circle cx="14" cy="14" r="12" /><path d="M14 12v9M14 7v2.500" /></svg>
            </InfoChip>
            <UrlText>localhost:49534/#/registerScreen</UrlText>
            <StarBtn><Star size={32} strokeWidth={2} /></StarBtn>
          </Omnibox>
          <Avatar>
            <svg width="40" height="40" viewBox="0 0 40 40"><circle cx="20" cy="15" r="6" fill="#fff" /><path d="M9 32c0-7 5-10 11-10s11 3 11 10z" fill="#fff" /></svg>
          </Avatar>
          <MoreBtn><EllipsisVertical size={32} strokeWidth={2.4} /></MoreBtn>
        </Toolbar>
        <Workspace>
          <DeviceArea>
            <DeviceToolbar>
              <DeviceItem>Dimensions: iPhone SE<Caret /></DeviceItem>
              <DeviceItem $ml={56} $dim>375</DeviceItem>
              <DeviceItem $ml={48}><X size={20} strokeWidth={2.4} /></DeviceItem>
              <DeviceItem $ml={22} $dim>667</DeviceItem>
              <DeviceItem $ml={86}>100%<Caret /></DeviceItem>
              <DeviceItem $ml={30}>No throttling<Caret /></DeviceItem>
              <DeviceItem $ml={52}>
                <svg width="36" height="40" viewBox="0 0 36 40" fill="none" stroke="#d0d0d0" strokeWidth="2.200"><rect x="10" y="8" width="16" height="24" rx="2" transform="rotate(30 18 20)" /><path d="M4 14a16 16 0 0 1 14-10l-3-3M32 26a16 16 0 0 1-14 10l3 3" /></svg>
              </DeviceItem>
              <DeviceItem $ml={104}><EllipsisVertical size={30} strokeWidth={2.4} /></DeviceItem>
            </DeviceToolbar>
            <Ruler>
              <RulerTick $ml={0} /><RulerTick $ml={48} /><RulerTick $ml={52} /><RulerTick $ml={635} /><RulerTick $ml={53} /><RulerTick $ml={48} />
            </Ruler>
            <Viewport>
              <Phone>
                <PhoneHeader>
                  <BackArrow><ArrowLeft size={48} strokeWidth={2.3} /></BackArrow>
                  <LogoMark>
                    <svg width="50" height="80" viewBox="0 0 50 80">
                      <defs>
                        <linearGradient id="lgl" x1="0" y1="0" x2="0" y2="1"><stop offset="0" stopColor="#4c3aa8" /><stop offset=".55" stopColor="#1d0f52" /><stop offset="1" stopColor="#1a0a40" /></linearGradient>
                        <linearGradient id="lgr" x1="0" y1="0" x2="0" y2="1"><stop offset="0" stopColor="#5fdaf2" /><stop offset=".4" stopColor="#4bbfd8" /><stop offset="1" stopColor="#2a6a9a" /></linearGradient>
                      </defs>
                      <path d="M0 0h15v32h11v16H15v12H0z" fill="url(#lgl)" />
                      <path d="M36 20h14v60H36V48H26V32h10z" fill="url(#lgr)" />
                    </svg>
                  </LogoMark>
                </PhoneHeader>
                <Title>Getting Started</Title>
                <Subtitle>Create an account to continue!</Subtitle>
                <FieldLabel $mt={55}>Email</FieldLabel>
                <InputBox $mt={12} $h={80}><InputIcon><MailGlyph /></InputIcon>xyz@gmail.com</InputBox>
                <ErrorText $mt={10}>Please eneter an valid e-mail address</ErrorText>
                <FieldLabel $mt={34}>Username</FieldLabel>
                <InputBox $mt={12} $h={79}><InputIcon><UserGlyph /></InputIcon>User XYZ</InputBox>
                <ErrorText $mt={11}>Please eneter an valid user name</ErrorText>
                <FieldLabel $mt={34}>Password</FieldLabel>
                <InputBox $mt={13} $h={91} $ls={0.3}><InputIcon><LockGlyph /></InputIcon>*************</InputBox>
                <ErrorText $mt={10}>Password length should be 7 character long</ErrorText>
                <AgeLabel>Age: 25</AgeLabel>
                <SliderTrack><SliderThumb /></SliderTrack>
                <FieldLabel $mt={76}>Country</FieldLabel>
                <SelectBox><FlagSlot><FlagGlyph /></FlagSlot><SelectText>United States</SelectText></SelectBox>
                <SelectCaret />
                <Toast>Please fill in all fields</Toast>
              </Phone>
            </Viewport>
          </DeviceArea>
          <DevTools>
            <DevTabs>
              <DevIcon $w={32}>
                <svg width="30" height="30" viewBox="0 0 30 30" fill="none" stroke="#c7c7c7" strokeWidth="2.200"><rect x="2" y="2" width="25" height="25" strokeDasharray="3 3" /><path d="M13 13v14l4-4 5 5 4-3-5-5 5-2z" fill="#3c3c3c" /></svg>
              </DevIcon>
              <DevIcon $w={60} $c="#7cacf8" $ml={8}>
                <svg width="34" height="30" viewBox="0 0 34 30" fill="none" stroke="#7cacf8" strokeWidth="3"><path d="M6 27V3h18v6" /><path d="M0 27h20" /><rect x="22" y="11" width="10" height="16" rx="1" /></svg>
              </DevIcon>
              <DevSep $mx={5} />
              <DevTab $ml={9}>Elements</DevTab>
              <DevTab>Console</DevTab>
              <DevTab>Sources</DevTab>
              <DevTab>Network</DevTab>
              <DevTab>Performance</DevTab>
              <DevTab $on>Application</DevTab>
              <DevIcon $w={30}><ChevronsRight size={30} strokeWidth={2.2} /></DevIcon>
              <DevTabsRight>
                <svg width="28" height="28" viewBox="0 0 28 28"><path d="M14 2l13 24H1z" fill="#ee8e5c" /><path d="M14 10v9M14 21.500v2" stroke="#3c3c3c" strokeWidth="2.400" /></svg>
                <WarnCount>1</WarnCount>
                <DevSep $mx={8} />
                <DevIcon $w={50}><Settings size={32} strokeWidth={2.2} /></DevIcon>
                <DevIcon $w={56}><EllipsisVertical size={30} strokeWidth={2.4} /></DevIcon>
                <DevIcon $w={56}><X size={30} strokeWidth={2.2} /></DevIcon>
              </DevTabsRight>
            </DevTabs>
            <DevBody>
              <Sidebar>
                {tree.map((g) => (
                  <TreeGroup key={g.title}>
                    <TreeHeading>{g.title}</TreeHeading>
                    {g.rows.map((r) => (
                      <TreeRow key={g.title + r.label} $sel={r.sel}>
                        <ArrowSlot>{r.arrow === "right" && <ArrowRightMark />}{r.arrow === "down" && <ArrowDownMark />}</ArrowSlot>
                        <NodeIcon>{nodeIcons[r.icon]}</NodeIcon>
                        {r.label}
                      </TreeRow>
                    ))}
                  </TreeGroup>
                ))}
              </Sidebar>
              <Pane>
                <FilterBar>
                  <RotateCw size={30} strokeWidth={2.2} />
                  <FilterPill>
                    <svg width="22" height="22" viewBox="0 0 22 22" fill="none" stroke="#b0b0b0" strokeWidth="2"><path d="M2 3h18l-7 8v8l-4-2v-6z" /></svg>
                    Filter
                  </FilterPill>
                  <FilterSep />
                  <svg width="30" height="30" viewBox="0 0 30 30" fill="none" stroke="#c7c7c7" strokeWidth="2.400"><circle cx="15" cy="15" r="13" /><path d="M6 24L24 6" /></svg>
                  <DevIcon $w={76} $c="#7d7d7d"><X size={28} strokeWidth={2.2} /></DevIcon>
                </FilterBar>
                <OriginTitle>http://localhost:49534</OriginTitle>
                <OriginRow><OriginKey>Origin</OriginKey>http://localhost:49534</OriginRow>
                <StorageTable>
                  <HeadCell>Key</HeadCell><HeadCell $last>Value</HeadCell>
                  <BodyCell /><BodyCell $last />
                </StorageTable>
                <Preview>Select a value to preview</Preview>
              </Pane>
            </DevBody>
          </DevTools>
        </Workspace>
      </Window>
      <Dock>
        {dockApps.map((a, i) => (
          <DockItem key={i}>
            <DockArt>{a.art}</DockArt>
            {a.badge && <Badge>{a.badge}</Badge>}
            <RunDot $on={a.on} />
          </DockItem>
        ))}
        <DockSep />
        <DockItem><DockArt><ChromeIcon /></DockArt><RunDot $on /></DockItem>
        <DockItem><DockArt><Terminal /></DockArt><RunDot $on /></DockItem>
        <DockItem><DockArt><ChromeIcon /></DockArt><RunDot $on /></DockItem>
        <DockSep />
        <DockItem><DockArt $mt={-9}><Trash /></DockArt></DockItem>
      </Dock>
    </Screen>
  );
}
